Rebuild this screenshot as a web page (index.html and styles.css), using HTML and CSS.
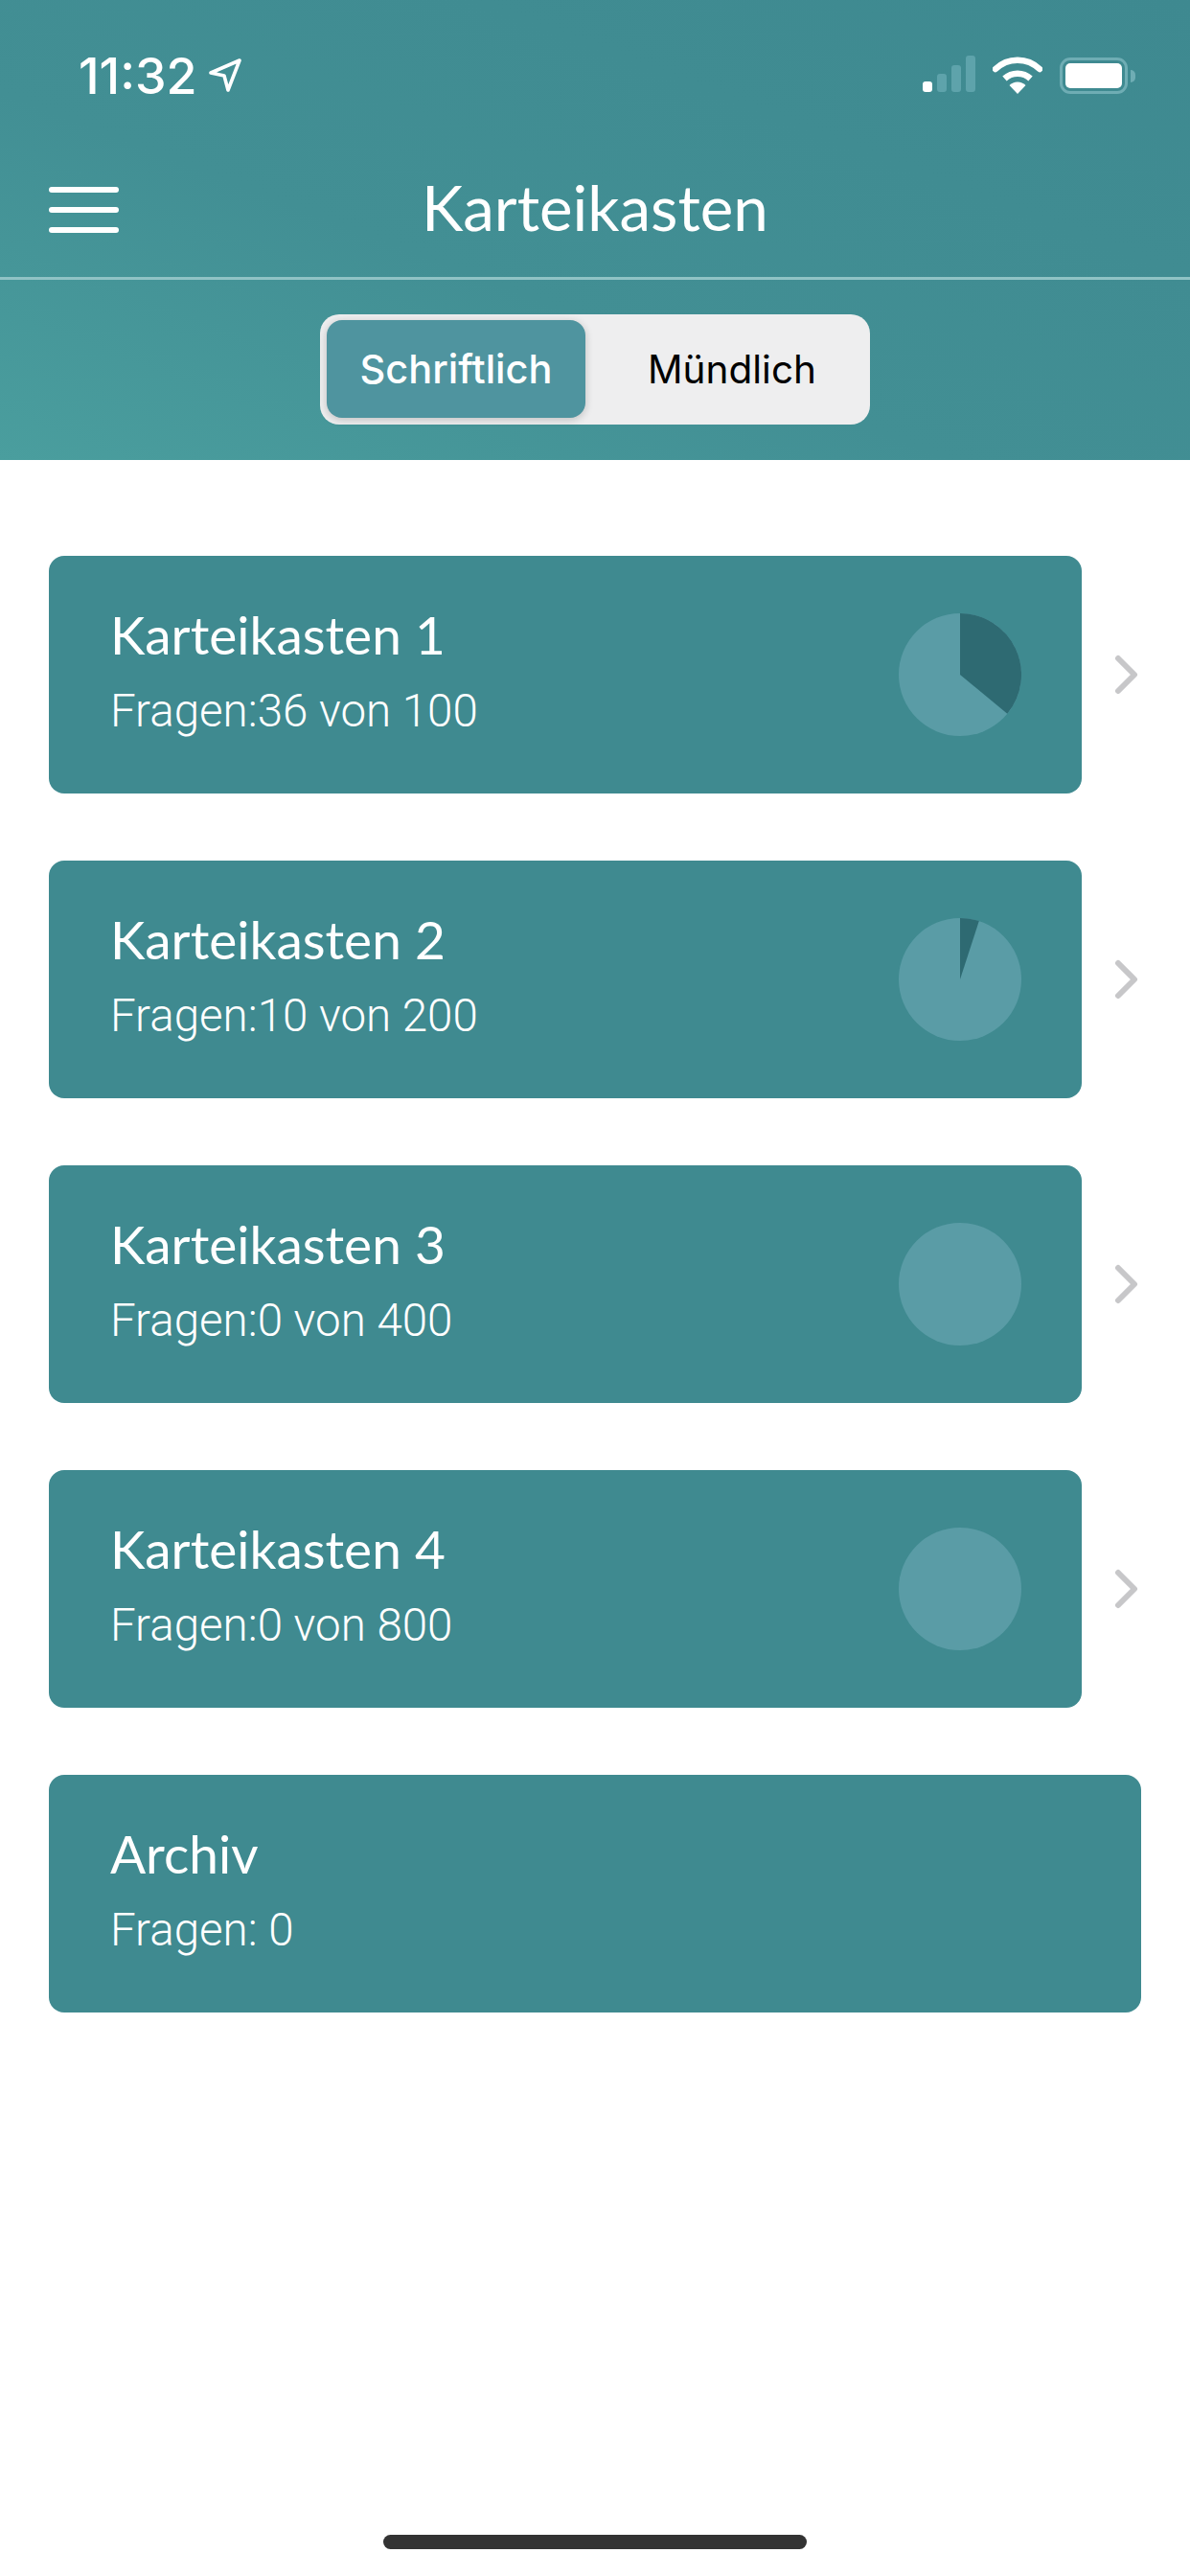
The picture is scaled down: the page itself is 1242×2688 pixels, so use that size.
FILE: index.html
```html
<!DOCTYPE html>
<html lang="de">
<head>
    <meta charset="UTF-8">
    <meta name="viewport" content="width=device-width, initial-scale=1.0">
    <title>Karteikasten</title>
    <link rel="stylesheet" href="styles.css">
</head>
<body>
    <div class="screen">
        <header class="top">
            <div class="status-bar">
                <div class="status-left">
                    <span class="time">11:32</span>
                    <svg class="loc-icon" viewBox="0 0 36 36" width="36" height="36">
                        <path d="M3 15 L33 2 L21 33 L17 18 Z" fill="none" stroke="#fff" stroke-width="3.6" stroke-linejoin="round"/>
                    </svg>
                </div>
                <div class="status-right">
                    <svg class="signal-icon" viewBox="0 0 55 38" width="55" height="38">
                        <rect x="0" y="27" width="10" height="11" rx="3" fill="#fff"/>
                        <rect x="15" y="19" width="10" height="19" rx="3" fill="#5ea3ab"/>
                        <rect x="30" y="10" width="10" height="28" rx="3" fill="#5ea3ab"/>
                        <rect x="45" y="0" width="10" height="38" rx="3" fill="#5ea3ab"/>
                    </svg>
                    <svg class="wifi-icon" viewBox="0 0 52 40" width="52" height="40">
                        <path d="M3 14 A33 33 0 0 1 49 14" fill="none" stroke="#fff" stroke-width="6.5" stroke-linecap="round" stroke-linejoin="round"/>
                        <path d="M12.500 24 A20 20 0 0 1 39.500 24" fill="none" stroke="#fff" stroke-width="6.500"/>
                        <path d="M26 40 L17.500 31 A12 12 0 0 1 34.500 31 Z" fill="#fff"/>
                    </svg>
                    <div class="battery">
                        <div class="battery-body"><div class="battery-fill"></div></div>
                        <div class="battery-tip"></div>
                    </div>
                </div>
            </div>
            <nav class="nav-row">
                <div class="burger"><span></span><span></span><span></span></div>
                <h1>Karteikasten</h1>
            </nav>
            <div class="toggle-row">
                <div class="toggle">
                    <div class="toggle-item active">Schriftlich</div>
                    <div class="toggle-item">Mündlich</div>
                </div>
            </div>
        </header>

        <main class="boxes">
            <div class="box-row">
                <div class="box">
                    <div class="box-text">
                        <h2>Karteikasten 1</h2>
                        <p>Fragen:36 von 100</p>
                    </div>
                    <svg class="pie" viewBox="-64 -64 128 128" width="128" height="128">
                        <circle r="64" fill="#5a9ca6"/>
                        <path d="M0 0 L0 -64 A64 64 0 0 1 49.300 40.800 Z" fill="#2e6a72"/>
                    </svg>
                </div>
                <svg class="chevron" viewBox="0 0 26 42" width="26" height="42">
                    <path d="M4 4 L21 21 L4 38" fill="none" stroke="#c7c7c9" stroke-width="6" stroke-linecap="round" stroke-linejoin="round"/>
                </svg>
            </div>
            <div class="box-row">
                <div class="box">
                    <div class="box-text">
                        <h2>Karteikasten 2</h2>
                        <p>Fragen:10 von 200</p>
                    </div>
                    <svg class="pie" viewBox="-64 -64 128 128" width="128" height="128">
                        <circle r="64" fill="#5a9ca6"/>
                        <path d="M0 0 L0 -64 A64 64 0 0 1 19.800 -60.900 Z" fill="#2e6a72"/>
                    </svg>
                </div>
                <svg class="chevron" viewBox="0 0 26 42" width="26" height="42">
                    <path d="M4 4 L21 21 L4 38" fill="none" stroke="#c7c7c9" stroke-width="6" stroke-linecap="round" stroke-linejoin="round"/>
                </svg>
            </div>
            <div class="box-row">
                <div class="box">
                    <div class="box-text">
                        <h2>Karteikasten 3</h2>
                        <p>Fragen:0 von 400</p>
                    </div>
                    <svg class="pie" viewBox="-64 -64 128 128" width="128" height="128">
                        <circle r="64" fill="#5a9ca6"/>
                    </svg>
                </div>
                <svg class="chevron" viewBox="0 0 26 42" width="26" height="42">
                    <path d="M4 4 L21 21 L4 38" fill="none" stroke="#c7c7c9" stroke-width="6" stroke-linecap="round" stroke-linejoin="round"/>
                </svg>
            </div>
            <div class="box-row">
                <div class="box">
                    <div class="box-text">
                        <h2>Karteikasten 4</h2>
                        <p>Fragen:0 von 800</p>
                    </div>
                    <svg class="pie" viewBox="-64 -64 128 128" width="128" height="128">
                        <circle r="64" fill="#5a9ca6"/>
                    </svg>
                </div>
                <svg class="chevron" viewBox="0 0 26 42" width="26" height="42">
                    <path d="M4 4 L21 21 L4 38" fill="none" stroke="#c7c7c9" stroke-width="6" stroke-linecap="round" stroke-linejoin="round"/>
                </svg>
            </div>
            <div class="box-row">
                <div class="box">
                    <div class="box-text">
                        <h2>Archiv</h2>
                        <p>Fragen: 0</p>
                    </div>
                </div>
            </div>
        </main>

        <div class="home-bar"></div>
    </div>
</body>
</html>
```

FILE: styles.css
```css
body {
    margin: 0;
    background-color: white;
    font-family: "Lato", "Liberation Sans", sans-serif;
}
.screen {
    width: 1242px;
    height: 2688px;
    display: flex;
    flex-direction: column;
    overflow: hidden;
}
.top {
    height: 480px;
    box-sizing: border-box;
    background: linear-gradient(to top right, #4a9e9e 0%, #428f94 40%, #3e8990 100%);
    color: white;
}
.status-bar {
    height: 132px;
    box-sizing: border-box;
    padding: 58px 57px 0 82px;
    display: flex;
    justify-content: space-between;
    align-items: flex-start;
}
.status-left {
    display: flex;
    align-items: center;
    gap: 11px;
    height: 42px;
}
.time {
    font-family: "Inter", "Roboto", sans-serif;
    font-size: 52px;
    font-weight: 500;
    letter-spacing: 0;
}
.status-right {
    display: flex;
    align-items: flex-start;
    gap: 18px;
}
.battery {
    display: flex;
    align-items: center;
    gap: 3px;
    margin-top: 2px;
}
.battery-body {
    width: 71px;
    height: 38px;
    box-sizing: border-box;
    border: 3px solid #6fadb4;
    border-radius: 11px;
    padding: 3px;
}
.battery-fill {
    width: 100%;
    height: 100%;
    background-color: white;
    border-radius: 5px;
}
.battery-tip {
    width: 5px;
    height: 13px;
    background-color: #6fadb4;
    border-radius: 0 5px 5px 0;
}
.nav-row {
    height: 160px;
    box-sizing: border-box;
    border-bottom: 3px solid #90c3c5;
    position: relative;
    display: flex;
    align-items: center;
    justify-content: center;
    padding-top: 9px;
}
.nav-row h1 {
    margin: 0;
    font-size: 65.5px;
    font-weight: 400;
}
.burger {
    position: absolute;
    left: 51px;
    top: 63px;
    width: 73px;
    display: flex;
    flex-direction: column;
    gap: 15px;
}
.burger span {
    display: block;
    height: 6px;
    background-color: white;
    border-radius: 3px;
}
.toggle-row {
    display: flex;
    justify-content: center;
    padding-top: 36px;
}
.toggle {
    width: 574px;
    height: 115px;
    box-sizing: border-box;
    padding: 6px 7px 7px;
    display: flex;
    background-color: #eeeeef;
    border-radius: 20px;
}
.toggle-item {
    width: 270px;
    display: flex;
    align-items: center;
    justify-content: center;
    font-family: "Inter", "Roboto", sans-serif;
    font-size: 40.5px;
    color: black;
}
.toggle-item + .toggle-item {
    flex: 1;
    padding-left: 16px;
}
.toggle-item.active {
    background-color: #4f949f;
    color: white;
    font-size: 41.5px;
    font-weight: 500;
    border-radius: 16px;
    box-shadow: 0 2px 8px rgba(0,0,0,0.2);
}
.boxes {
    padding: 100px 51px 0;
    display: flex;
    flex-direction: column;
    gap: 70px;
}
.box-row {
    display: flex;
    align-items: center;
}
.box {
    flex: 1;
    height: 248px;
    box-sizing: border-box;
    padding: 0 63px 0 64px;
    display: flex;
    align-items: center;
    justify-content: space-between;
    background-color: #3f8a90;
    border-radius: 16px;
    color: white;
}
.box-text {
    padding-bottom: 10px;
}
.box-text h2 {
    margin: 0 0 22px;
    font-size: 55px;
    font-weight: 400;
    line-height: 64px;
}
.box-text p {
    margin: 0;
    font-family: "Roboto", "Inter", sans-serif;
    font-size: 47.5px;
    font-weight: 300;
    line-height: 52px;
}
.chevron {
    margin-left: 34px;
    margin-right: 2px;
}
.home-bar {
    width: 442px;
    height: 15px;
    margin: auto auto 28px;
    background-color: #333;
    border-radius: 8px;
}
```
